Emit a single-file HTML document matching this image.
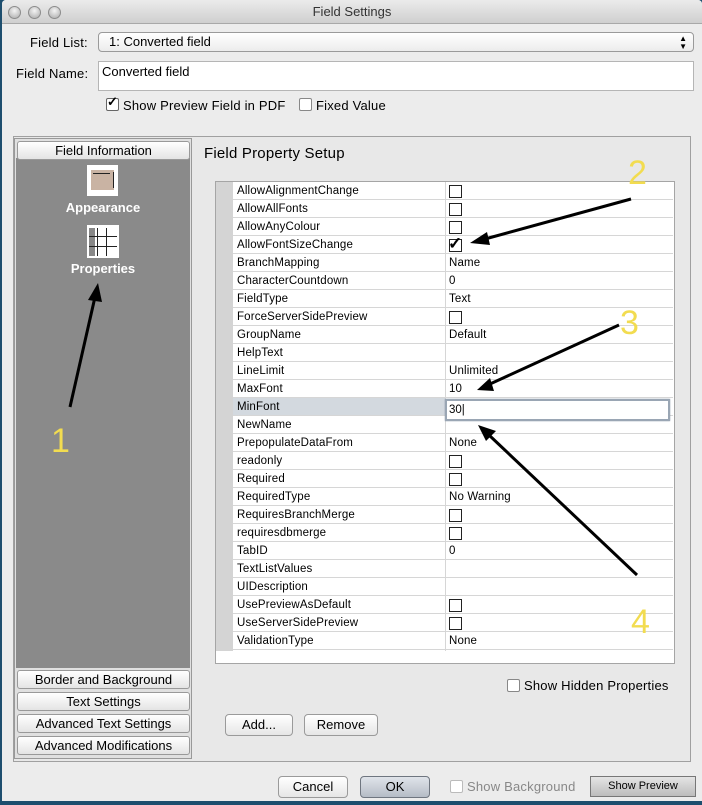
<!DOCTYPE html>
<html><head><meta charset="utf-8"><style>
*{margin:0;padding:0;box-sizing:border-box}
body{width:702px;height:805px;overflow:hidden;background:#1d4e6e;font-family:"Liberation Sans",sans-serif;position:relative;color:#000}
.a{position:absolute}
#win{left:2px;top:0;width:700px;height:801px;background:#ececec;border-radius:4px 4px 0 0}
#title{left:2px;top:0;width:700px;height:24px;background:linear-gradient(#ebebeb,#cfcfcf);border-bottom:1px solid #a8a8a8;border-radius:4px 4px 0 0;text-align:center;font-size:13px;line-height:24px;color:#333}
.tl{width:13px;height:13px;border-radius:50%;background:radial-gradient(circle at 50% 35%,#f4f4f4,#a9a9a9);border:1px solid #8c8c8c;top:6px}
.lbl{font-size:13px;letter-spacing:.2px}
.btn{background:linear-gradient(#fff,#e6e6e6);border:1px solid #9a9a9a;border-radius:4px;font-size:13px;text-align:center}
.cb{width:12px;height:12px;border:1px solid #888;border-radius:2px;background:#fff}
.row{position:absolute;left:233px;width:440px;height:18px;border-bottom:1px solid #d6d6d6;font-size:11.5px;line-height:19px;letter-spacing:.15px}
.row span{position:absolute;left:4px}
.row .v{left:216px}
.row .bx{position:absolute;left:216px;top:3px;width:13px;height:13px;border:1px solid #222;background:#fff}
.side{background:linear-gradient(#fff,#e4e4e4);border:1px solid #999;border-radius:3px;left:17px;width:173px;height:19px;font-size:13px;text-align:center;line-height:18px}
.num{font-size:34px;color:#f2dc50;font-family:"Liberation Sans",sans-serif}
</style></head><body>
<div id="win" class="a"></div>
<div id="title" class="a">Field Settings</div>
<div class="a tl" style="left:8px"></div>
<div class="a tl" style="left:28px"></div>
<div class="a tl" style="left:48px"></div>

<div class="a lbl" style="left:30px;top:35px">Field List:</div>
<div class="a" style="left:98px;top:32px;width:596px;height:20px;border:1px solid #9a9a9a;border-radius:4px;background:linear-gradient(#fff,#ececec);font-size:13px;line-height:18px;padding-left:10px">1: Converted field<span style="position:absolute;right:6px;font-size:8px;line-height:8px;top:2px">▲<br>▼</span></div>
<div class="a lbl" style="left:16px;top:66px">Field Name:</div>
<div class="a" style="left:98px;top:61px;width:596px;height:30px;border:1px solid #b5b5b5;background:#fff;font-size:13px;padding:2px 3px">Converted field</div>
<div class="a cb" style="left:106px;top:98px;width:13px;height:13px;border-color:#666"></div>
<div class="a" style="left:107px;top:94px;font-size:13px;font-weight:bold">✓</div>
<div class="a lbl" style="left:123px;top:98px">Show Preview Field in PDF</div>
<div class="a cb" style="left:299px;top:98px;width:13px;height:13px"></div>
<div class="a lbl" style="left:316px;top:98px">Fixed Value</div>

<div class="a" style="left:13px;top:136px;width:678px;height:626px;border:1px solid #a0a0a0;background:#e8e8e8"></div>
<div class="a" style="left:14px;top:138px;width:178px;height:621px;border:1px solid #999;background:#e0e0e0"></div>
<div class="a" style="left:16px;top:158px;width:174px;height:510px;background:#8a8a8a"></div>
<div class="a side" style="top:141px">Field Information</div>
<div class="a" style="left:87px;top:165px;width:31px;height:31px;background:#fff"></div>
<div class="a" style="left:91px;top:170px;width:23px;height:20px;background:#c9b3a3"></div>
<div class="a" style="left:93px;top:173px;width:17px;height:1px;background:#222"></div>
<div class="a" style="left:113px;top:172px;width:1px;height:16px;background:#222"></div>
<div class="a" style="left:16px;top:200px;width:174px;text-align:center;color:#fff;font-weight:bold;font-size:13px">Appearance</div>
<div class="a" style="left:87px;top:225px;width:32px;height:33px;background:#fff"></div>
<div class="a" style="left:89px;top:228px;width:6px;height:28px;background:#888"></div>
<div class="a" style="left:97px;top:228px;width:1px;height:28px;background:#222"></div>
<div class="a" style="left:106px;top:228px;width:1px;height:28px;background:#222"></div>
<div class="a" style="left:89px;top:236px;width:28px;height:1px;background:#222"></div>
<div class="a" style="left:89px;top:246px;width:28px;height:1px;background:#222"></div>
<div class="a" style="left:16px;top:261px;width:174px;text-align:center;color:#fff;font-weight:bold;font-size:13px">Properties</div>
<div class="a side" style="top:670px">Border and Background</div>
<div class="a side" style="top:692px">Text Settings</div>
<div class="a side" style="top:714px">Advanced Text Settings</div>
<div class="a side" style="top:736px">Advanced Modifications</div>

<div class="a" style="left:204px;top:145px;font-size:15px;letter-spacing:.2px">Field Property Setup</div>
<div class="a" style="left:215px;top:181px;width:460px;height:483px;border:1px solid #a5a5a5;background:#fff"></div>
<div class="a" style="left:216px;top:182px;width:17px;height:469px;background:#d4d4d4"></div>
<div class="a" style="left:445px;top:182px;width:1px;height:469px;background:#d6d6d6"></div>
<div class="a" style="left:233px;top:398px;width:212px;height:18px;background:#d3d9df"></div>

<div class="row" style="top:182px"><span>AllowAlignmentChange</span><i class="bx"></i></div>
<div class="row" style="top:200px"><span>AllowAllFonts</span><i class="bx"></i></div>
<div class="row" style="top:218px"><span>AllowAnyColour</span><i class="bx"></i></div>
<div class="row" style="top:236px"><span>AllowFontSizeChange</span><i class="bx"></i><b style="position:absolute;left:215px;top:-2px;font-size:17px;line-height:20px">✓</b></div>
<div class="row" style="top:254px"><span>BranchMapping</span><span class="v">Name</span></div>
<div class="row" style="top:272px"><span>CharacterCountdown</span><span class="v">0</span></div>
<div class="row" style="top:290px"><span>FieldType</span><span class="v">Text</span></div>
<div class="row" style="top:308px"><span>ForceServerSidePreview</span><i class="bx"></i></div>
<div class="row" style="top:326px"><span>GroupName</span><span class="v">Default</span></div>
<div class="row" style="top:344px"><span>HelpText</span></div>
<div class="row" style="top:362px"><span>LineLimit</span><span class="v">Unlimited</span></div>
<div class="row" style="top:380px"><span>MaxFont</span><span class="v">10</span></div>
<div class="row" style="top:398px"><span>MinFont</span></div>
<div class="row" style="top:416px"><span>NewName</span></div>
<div class="row" style="top:434px"><span>PrepopulateDataFrom</span><span class="v">None</span></div>
<div class="row" style="top:452px"><span>readonly</span><i class="bx"></i></div>
<div class="row" style="top:470px"><span>Required</span><i class="bx"></i></div>
<div class="row" style="top:488px"><span>RequiredType</span><span class="v">No Warning</span></div>
<div class="row" style="top:506px"><span>RequiresBranchMerge</span><i class="bx"></i></div>
<div class="row" style="top:524px"><span>requiresdbmerge</span><i class="bx"></i></div>
<div class="row" style="top:542px"><span>TabID</span><span class="v">0</span></div>
<div class="row" style="top:560px"><span>TextListValues</span></div>
<div class="row" style="top:578px"><span>UIDescription</span></div>
<div class="row" style="top:596px"><span>UsePreviewAsDefault</span><i class="bx"></i></div>
<div class="row" style="top:614px"><span>UseServerSidePreview</span><i class="bx"></i></div>
<div class="row" style="top:632px"><span>ValidationType</span><span class="v">None</span></div>
<div class="a" style="left:445px;top:399px;width:225px;height:22px;border:2px solid #9aa6b4;background:#fff;font-size:11.5px;line-height:18px;padding-left:2px;box-shadow:0 0 1px #6d7e92">30|</div>

<div class="a cb" style="left:507px;top:679px;width:13px;height:13px"></div>
<div class="a lbl" style="left:524px;top:678px">Show Hidden Properties</div>
<div class="a btn" style="left:225px;top:714px;width:68px;height:22px;line-height:20px">Add...</div>
<div class="a btn" style="left:304px;top:714px;width:74px;height:22px;line-height:20px">Remove</div>

<div class="a btn" style="left:278px;top:776px;width:70px;height:22px;line-height:20px">Cancel</div>
<div class="a btn" style="left:360px;top:776px;width:70px;height:22px;line-height:20px;background:linear-gradient(#e0e4ea,#b5bcc6);border-color:#6f7680">OK</div>
<div class="a cb" style="left:450px;top:780px;width:13px;height:13px;border-color:#bbb"></div>
<div class="a lbl" style="left:467px;top:779px;color:#888">Show Background</div>
<div class="a" style="left:590px;top:776px;width:106px;height:21px;background:linear-gradient(#e4e4e4,#bdbdbd);border:1px solid #777;font-size:11px;text-align:center;line-height:19px">Show Preview</div>

<div class="a num" style="left:51px;top:422px">1</div>
<div class="a num" style="left:628px;top:154px">2</div>
<div class="a num" style="left:620px;top:304px">3</div>
<div class="a num" style="left:631px;top:603px">4</div>
<svg class="a" style="left:0;top:0" width="702" height="805">
<g stroke="#000" stroke-width="3" fill="none">
<line x1="70" y1="407" x2="95" y2="297"/>
<line x1="631" y1="199" x2="485" y2="239"/>
<line x1="619" y1="325" x2="490" y2="384"/>
<line x1="637" y1="575" x2="490" y2="436"/>
</g>
<g fill="#000">
<polygon points="98,283 88,300 102,302"/>
<polygon points="470,243 487,232 490,245"/>
<polygon points="477,390 490,378 494,391"/>
<polygon points="478,425 496,431 486,441"/>
</g>
</svg>
</body></html>
